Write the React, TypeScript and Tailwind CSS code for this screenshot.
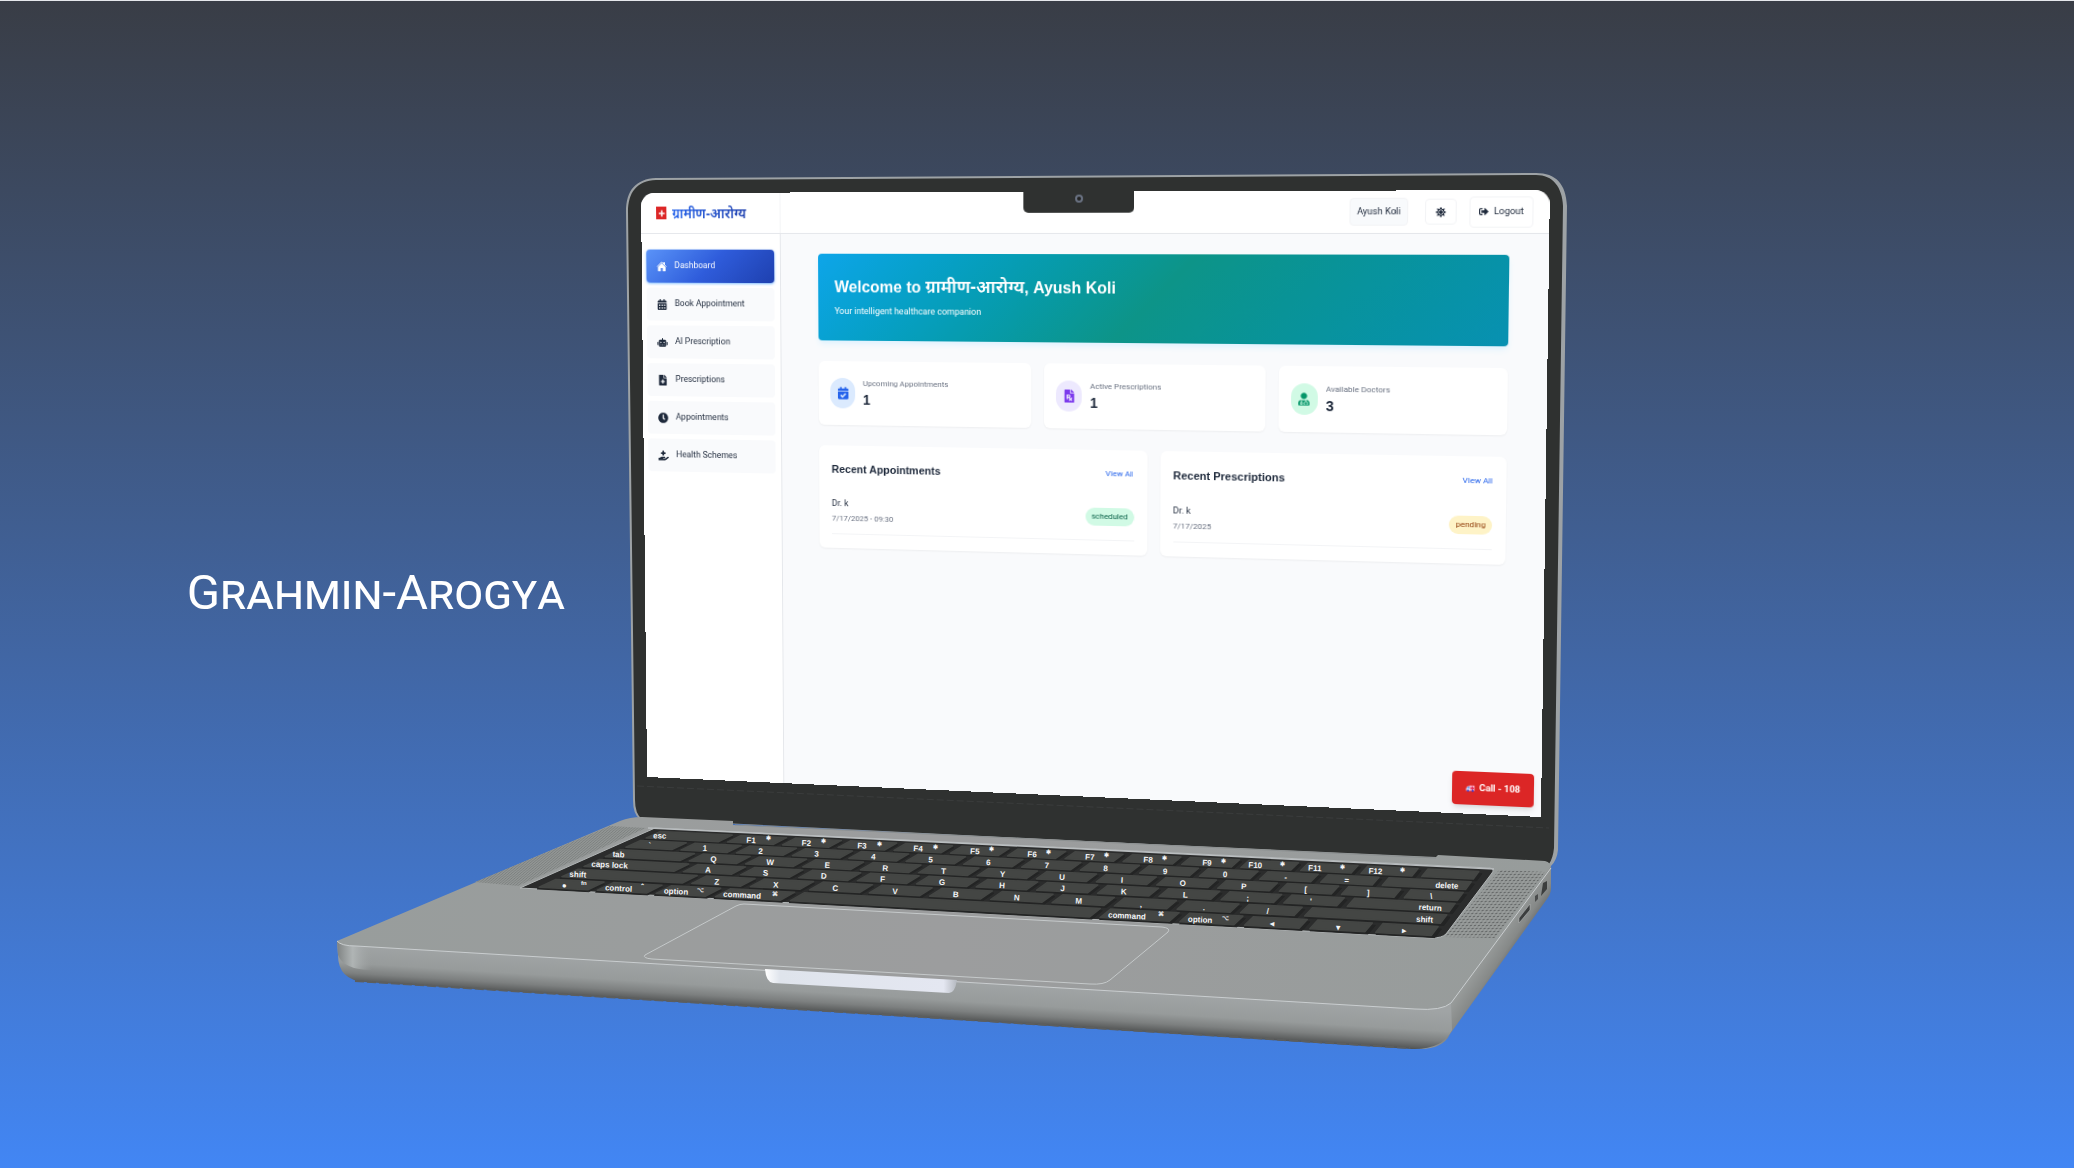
import type { CSSProperties, ReactNode } from "react";
import {
  FaCalendarAlt, FaRobot, FaFileMedical, FaClock, FaHandHoldingMedical,
  FaCalendarCheck, FaFilePrescription, FaUserMd, FaSignOutAlt, FaSun,
} from "react-icons/fa";
import { IoHome } from "react-icons/io5";

type Point = [number, number];
type Quad = [Point, Point, Point, Point];

/** Coefficients that map the unit square onto a quad (tl, tr, br, bl). */
function project([p0, p1, p2, p3]: Quad) {
  const dx1 = p1[0] - p2[0], dx2 = p3[0] - p2[0], sx = p0[0] - p1[0] + p2[0] - p3[0];
  const dy1 = p1[1] - p2[1], dy2 = p3[1] - p2[1], sy = p0[1] - p1[1] + p2[1] - p3[1];
  const den = dx1 * dy2 - dx2 * dy1;
  const g = (sx * dy2 - dx2 * sy) / den;
  const h = (dx1 * sy - sx * dy1) / den;
  return {
    a: p1[0] - p0[0] + g * p1[0], b: p3[0] - p0[0] + h * p3[0], c: p0[0],
    d: p1[1] - p0[1] + g * p1[1], e: p3[1] - p0[1] + h * p3[1], f: p0[1], g, h,
  };
}

const SCREEN_W = 908;
const SCREEN_H = 608;
const SCREEN: Quad = [[309, 22], [1218, 19], [1209, 646], [315, 606]];

function screenPose(): CSSProperties {
  const m = project(SCREEN);
  const w = SCREEN_W, h = SCREEN_H;
  return {
    transform: `matrix3d(${[m.a / w, m.d / w, 0, m.g / w, m.b / h, m.e / h, 0, m.h / h, 0, 0, 1, 0, m.c, m.f, 0, 1].join(",")})`,
  };
}

type Key = { w: number; t?: string; s?: string };
const letters = (s: string): Key[] => s.split("").map((t) => ({ w: 1, t }));
const ROWS: Key[][] = [
  [{ w: 1.5, t: "esc" }, ...Array.from({ length: 12 }, (_, i) => ({ w: 1, t: "F" + (i + 1), s: "✱" })), { w: 1 }],
  [...letters("`1234567890-="), { w: 1.5, t: "delete" }],
  [{ w: 1.5, t: "tab" }, ...letters("QWERTYUIOP[]\\")],
  [{ w: 1.75, t: "caps lock" }, ...letters("ASDFGHJKL;'"), { w: 1.75, t: "return" }],
  [{ w: 2.25, t: "shift" }, ...letters("ZXCVBNM,./"), { w: 2.25, t: "shift" }],
  [{ w: 1, t: "●", s: "fn" }, { w: 1, t: "control", s: "⌃" }, { w: 1, t: "option", s: "⌥" }, { w: 1.25, t: "command", s: "⌘" }, { w: 5 }, { w: 1.25, t: "command", s: "⌘" }, { w: 1, t: "option", s: "⌥" }, { w: 1, t: "◂" }, { w: 1, t: "▾" }, { w: 1, t: "▸" }],
];

function Keys() {
  const m = project([[651, 829], [1493, 870], [1444, 938], [521, 888]]);
  const at = (u: number, v: number): Point => {
    const k = 1 + m.g * u + m.h * v;
    return [(m.a * u + m.b * v + m.c) / k, (m.d * u + m.e * v + m.f) / k];
  };
  const poly = (u0: number, v0: number, u1: number, v1: number) =>
    [at(u0, v0), at(u1, v0), at(u1, v1), at(u0, v1)].map((p) => p.map((n) => n.toFixed(1)).join(",")).join(" ");
  return (
    <g>
      {ROWS.map((row, r) => {
        let x = 0;
        return row.map((key, i) => {
          const u0 = 0.017 + (x / 14.5) * 0.98;
          x += key.w;
          const u1 = 0.017 + (x / 14.5) * 0.98 - 0.011;
          const v0 = 0.035 + r * 0.164;
          const v1 = v0 + 0.12;
          const right = i > 6 && key.w > 1 && key.t !== "command";
          const word = (key.t ?? "").length > 2;
          const c = at(word ? (right ? u1 - 0.008 : u0 + 0.008) : (u0 + u1) / 2, v0 + 0.115);
          const top = at(u1 - 0.014, v0 + 0.06);
          return (
            <g key={`${r}-${i}`}>
              <polygon points={poly(u0 + 0.002, v0 + 0.03, u1 + 0.005, v1 + 0.026)} fill="#232424" stroke="#232424" strokeWidth="1" />
              <polygon points={poly(u0, v0, u1, v1)} fill="#444644" stroke="#444644" strokeWidth="1.5" strokeLinejoin="round" />
              {key.t && (
                <text x={c[0]} y={c[1]} textAnchor={word ? (right ? "end" : "start") : "middle"} transform={`rotate(3 ${c[0]} ${c[1]})`} className="fill-gray-100 text-[8px] font-bold">{key.t}</text>
              )}
              {key.s && (
                <text x={top[0]} y={top[1]} textAnchor="middle" className="fill-gray-100 text-[6px] font-bold">{key.s}</text>
              )}
            </g>
          );
        });
      })}
    </g>
  );
}

function Laptop() {
  return (
    <svg viewBox="332 171 1240 880" className="absolute inset-0 h-full w-full" aria-hidden="true">
      <defs>
        <linearGradient id="front" gradientUnits="userSpaceOnUse" x1="880" y1="976" x2="877.5" y2="1016">
          <stop offset="0" stopColor="#a0a4a5" />
          <stop offset="0.5" stopColor="#979b9b" />
          <stop offset="0.75" stopColor="#7d8080" />
          <stop offset="1" stopColor="#4f5151" />
        </linearGradient>
        <linearGradient id="corner" x1="0" x2="1">
          <stop offset="0" stopColor="#7e8282" />
          <stop offset="0.45" stopColor="#b2b7b7" stopOpacity="0.9" />
          <stop offset="1" stopColor="#a0a4a5" stopOpacity="0" />
        </linearGradient>
        <linearGradient id="side" gradientUnits="userSpaceOnUse" x1="1470" y1="965" x2="1500" y2="985">
          <stop offset="0" stopColor="#9fa3a2" />
          <stop offset="0.6" stopColor="#868988" />
          <stop offset="1" stopColor="#5a5c5b" />
        </linearGradient>
        <linearGradient id="deck" x1="0" x2="1">
          <stop offset="0" stopColor="#989d9c" />
          <stop offset="0.5" stopColor="#9c9d9e" />
          <stop offset="1" stopColor="#979c9b" />
        </linearGradient>
        <linearGradient id="lip" x1="0" x2="1">
          <stop offset="0" stopColor="#ffffff" />
          <stop offset="0.08" stopColor="#dfe4ec" />
          <stop offset="0.93" stopColor="#e4e7f1" />
          <stop offset="1" stopColor="#b4b8bf" />
        </linearGradient>
        <pattern id="holes" width="4" height="3" patternUnits="userSpaceOnUse" patternTransform="skewX(-38)">
          <rect width="4" height="3" fill="#9a9e9d" />
          <ellipse cx="2" cy="1.5" rx="1.3" ry="0.9" fill="#686b6b" />
        </pattern>
        <pattern id="finegrain" width="3" height="2" patternUnits="userSpaceOnUse" patternTransform="skewX(-50)">
          <rect width="3" height="2" fill="#9a9e9d" />
          <ellipse cx="1.5" cy="1" rx="1" ry="0.7" fill="#6f7372" />
        </pattern>
      </defs>

      <path d="M626 212 C626 190 636 179 656 178 L1536 173 C1556 173 1566 184 1567 206 L1558 850 Q1557 860 1551 866 L640 819 Q633 815 633 800 Z" fill="#9da2a5" />
      <path d="M628 212 C628 192 637 181 656 180 L1536 175 C1553 175 1562 187 1563 206 L1554 848 Q1553 858 1549 864 L642 819 Q635 814 635 800 Z" fill="#2f3130" />
      <path d="M637 786 L1549 828" stroke="#3a3c3c" strokeWidth="1" strokeDasharray="7 3" />

      <path d="M337 941 L620 821 Q630 817 642 817 L733 821 L733 825 L1436 857 L1438 855 L1545 861 Q1552 863 1551 869 L1452 1004 Q1445 1012 1420 1010 L352 960 Z" fill="url(#deck)" />
      <path d="M1551 866 V888 Q1551 894 1547 899 L1450 1034 Q1443 1049 1420 1049 L1420 1009 Q1445 1010 1452 1002 Z" fill="url(#side)" />
      <path d="M337 941 Q341 946 356 946 L1415 1009 Q1440 1011 1451 1003 L1452 1030 Q1442 1050 1412 1049 L365 982 Q338 980 338 955 Z" fill="url(#front)" />
      <path d="M337 941 Q341 946 356 946 L372 947 V970 Q344 970 338 955 Z" fill="url(#corner)" />
      <path d="M355 981 L1410 1048" stroke="#5c5e5e" strokeWidth="2" strokeDasharray="9 3" fill="none" />
      <path d="M337 941 Q341 946 356 946 L1415 1009 Q1442 1011 1451 1003 L1551 868" stroke="#c9cdcf" strokeWidth="1" fill="none" />
      <path d="M735 825 L1436 858" stroke="#8c9091" strokeWidth="1" />

      <path d="M610 826 L646 828 L518 886 L475 882 Z" fill="url(#finegrain)" />
      <path d="M1499 870 L1545 872 L1495 938 L1445 937 Z" fill="url(#holes)" />

      <path d="M655 828 L1490 868 Q1495 869 1492 873 L1446 934 Q1442 938 1432 938 L520 888 Z" fill="#2b2c2c" stroke="#b3b7b8" strokeWidth="1" />
      <path d="M648 828 L1494 869" stroke="#b9bdbf" strokeWidth="1.5" />
      <Keys />

      <path d="M744 904 L1162 927 Q1171 928 1168 932 L1110 980 Q1104 985 1090 984 L652 959 Q642 958 645 955 L736 906 Q740 904 744 904 Z" fill="#9c9d9e" fillOpacity="0.5" stroke="#c5c9ca" strokeWidth="1" />
      <path d="M765 969 L957 980 Q955 993 949 993 L773 983 Q766 982 765 969 Z" fill="url(#lip)" />

      <path d="M1543 883 L1547 881 V889 L1541 896 Z" fill="#3c3e3e" />
      <path d="M1535 896 L1538 894 V899 L1535 902 Z" fill="#4a4c4c" />
      <path d="M1519 918 L1530 904 V910 L1519 923 Z" fill="#3c3e3e" stroke="#b9bdbe" strokeWidth="0.5" />
    </svg>
  );
}

const NAV = [
  { label: "Dashboard", icon: IoHome },
  { label: "Book Appointment", icon: FaCalendarAlt },
  { label: "AI Prescription", icon: FaRobot },
  { label: "Prescriptions", icon: FaFileMedical },
  { label: "Appointments", icon: FaClock },
  { label: "Health Schemes", icon: FaHandHoldingMedical },
];

const STATS = [
  { label: "Upcoming Appointments", value: 1, icon: FaCalendarCheck, tone: "bg-[#dbeafe] text-[#2563eb]" },
  { label: "Active Prescriptions", value: 1, icon: FaFilePrescription, tone: "bg-[#ede9fe] text-[#7c3aed]" },
  { label: "Available Doctors", value: 3, icon: FaUserMd, tone: "bg-[#d1fae5] text-[#059669]" },
];

function Panel({ title, date, badge }: { title: string; date: string; badge: ReactNode }) {
  return (
    <section className="rounded-md bg-white px-[13px] pt-4 pb-[14px] shadow-xs">
      <div className="flex h-4 items-center justify-between">
        <h2 className="text-[11px] font-bold">{title}</h2>
        <a href="#all" className="font-['Roboto',sans-serif] text-[8px] text-[#2563eb]">View All</a>
      </div>
      <div className="mt-5 flex items-center justify-between border-b border-gray-100 pb-2">
        <div className="font-['Roboto',sans-serif]">
          <p className="text-[9px] leading-[15px]">Dr. k</p>
          <p className="text-[8px] leading-[15px] text-gray-500">{date}</p>
        </div>
        {badge}
      </div>
    </section>
  );
}

function Ambulance() {
  return (
    <svg viewBox="0 0 20 18" className="h-2 w-[9px]" aria-hidden="true">
      <path d="M8 2h11v12H8z" fill="#f9a8c4" />
      <path d="M1 9l3-5h5v10H1z" fill="#e8ecfa" />
      <path d="M3 8l2-3h3v4H3z" fill="#5b8def" />
      <path d="M13 4h2v3h3v2h-3v3h-2V9h-3V7h3z" fill="#e11d48" />
      <circle cx="5" cy="14" r="2.5" fill="#4338ca" />
      <circle cx="15" cy="14" r="2.5" fill="#4338ca" />
    </svg>
  );
}

function Dashboard() {
  return (
    <div
      className="absolute top-0 left-0 flex h-[608px] w-[908px] origin-top-left flex-col overflow-hidden rounded-t-[14px] bg-[#f9fafc] text-[8px] text-[#1e293b]"
      style={screenPose()}
    >
      <header className="flex h-[42px] shrink-0 border-b border-gray-200 bg-white">
        <div className="flex w-[148px] items-center gap-[6px] border-r border-gray-100 pl-4">
          <span className="flex h-[13px] w-[11px] items-center justify-center bg-[#dc2626]" aria-hidden="true">
            <svg viewBox="0 0 10 10" className="h-2 w-2"><path d="M5 1v8M1 5h8" stroke="#fff" strokeWidth="2" /></svg>
          </span>
          <span className="bg-linear-to-r from-[#2563eb] to-[#1e40af] bg-clip-text text-[14px] leading-6 font-semibold text-transparent">ग्रामीण-आरोग्य</span>
        </div>
        <div className="flex grow items-center justify-end pr-[15px] font-['Roboto',sans-serif] text-[9px]">
          <span className="mr-4 flex h-[27px] items-center rounded-sm border border-gray-100 bg-slate-50 px-[6px]">Ayush Koli</span>
          <button type="button" aria-label="Toggle theme" className="mr-3 flex h-[25px] w-[30px] items-center justify-center rounded-sm border border-gray-100"><FaSun className="h-[10px] w-[10px]" /></button>
          <button type="button" className="flex h-[30px] items-center gap-[5px] rounded-sm border border-gray-100 px-2"><FaSignOutAlt className="h-[9px] w-[9px]" />Logout</button>
        </div>
      </header>
      <div className="flex grow">
        <nav className="flex w-[148px] shrink-0 flex-col gap-[5px] border-r border-gray-200 bg-white pt-4 pr-[6px] pl-[5px] font-['Roboto',sans-serif] text-[9px]">
          {NAV.map(({ label, icon: Icon }, i) => (
            <a
              key={label}
              href={`#${label}`}
              className={
                i === 0
                  ? "flex h-[34px] items-center gap-2 rounded-sm bg-linear-135 from-[#5b93f8] via-[#2f5cdb] to-[#1e40af] pl-[11px] text-white shadow-sm shadow-blue-300"
                  : "flex h-[34px] items-center gap-2 rounded-sm bg-[#f9fafc] pl-[11px]"
              }
            >
              <Icon className="h-[11px] w-[11px]" />
              {label}
            </a>
          ))}
        </nav>
        <main className="flex grow flex-col gap-[21px] pt-5 pr-[37px] pl-[39px]">
          <section className="h-[88px] rounded-sm bg-linear-135 from-[#0ea5e9] via-[#0d9488] to-[#0891b2] px-[17px] pt-[21px] text-white shadow-md shadow-sky-100">
            <h1 className="text-[16px] leading-6 font-bold">Welcome to <span className="text-[18px] font-semibold">ग्रामीण-आरोग्य</span>, Ayush Koli</h1>
            <p className="mt-1 font-['Roboto',sans-serif] text-[9px] leading-4">Your intelligent healthcare companion</p>
          </section>
          <section className="grid grid-cols-3 gap-[13px]">
            {STATS.map(({ label, value, icon: Icon, tone }) => (
              <div key={label} className="flex h-[65px] items-center gap-2 rounded-md bg-white px-3 shadow-xs">
                <span className={`flex h-[31px] w-[26px] items-center justify-center rounded-full ${tone}`}><Icon className="h-[13px] w-[11px]" /></span>
                <div className="pb-[2px]">
                  <p className="font-['Roboto',sans-serif] leading-[14px] text-gray-500">{label}</p>
                  <p className="text-[14px] leading-[18px] font-bold">{value}</p>
                </div>
              </div>
            ))}
          </section>
          <div className="grid grid-cols-2 gap-[13px]">
            <Panel title="Recent Appointments" date="7/17/2025 - 09:30" badge={<span className="rounded-full bg-[#d1fae5] px-[6px] py-[3px] font-['Roboto',sans-serif] leading-3 text-[#065f46]">scheduled</span>} />
            <Panel title="Recent Prescriptions" date="7/17/2025" badge={<span className="rounded-full bg-[#fef3c7] px-[6px] py-[3px] font-['Roboto',sans-serif] leading-3 text-[#92400e]">pending</span>} />
          </div>
        </main>
      </div>
      <button type="button" className="absolute right-[7px] bottom-[9px] flex h-[33px] w-[78px] items-center justify-center gap-1 rounded-sm bg-[#dc2626] font-['Roboto',sans-serif] text-[9px] font-bold text-white shadow-md"><Ambulance />Call - 108</button>
      <div className="absolute top-0 left-[398px] flex h-[21px] w-[111px] items-center justify-center rounded-b-[5px] bg-[#2f3130]">
        <span className="-mt-2 h-2 w-2 rounded-full border-2 border-gray-500 bg-[#222]" />
      </div>
    </div>
  );
}

export default function App() {
  return (
    <div className="flex min-h-screen items-center overflow-hidden border-t border-gray-200 bg-linear-to-b from-[#393d46] to-[#4286f4] pl-[9%] font-['Liberation_Sans','Noto_Sans',sans-serif]">
      <h1 className="z-10 mt-4 w-[380px] shrink-0 text-[49px] leading-none whitespace-nowrap text-white font-['Roboto',sans-serif] [font-variant-caps:small-caps]">Grahmin-Arogya</h1>
      <div className="relative mt-13 -ml-[235px] h-[880px] w-[1240px] shrink-0">
        <Laptop />
        <Dashboard />
      </div>
    </div>
  );
}
